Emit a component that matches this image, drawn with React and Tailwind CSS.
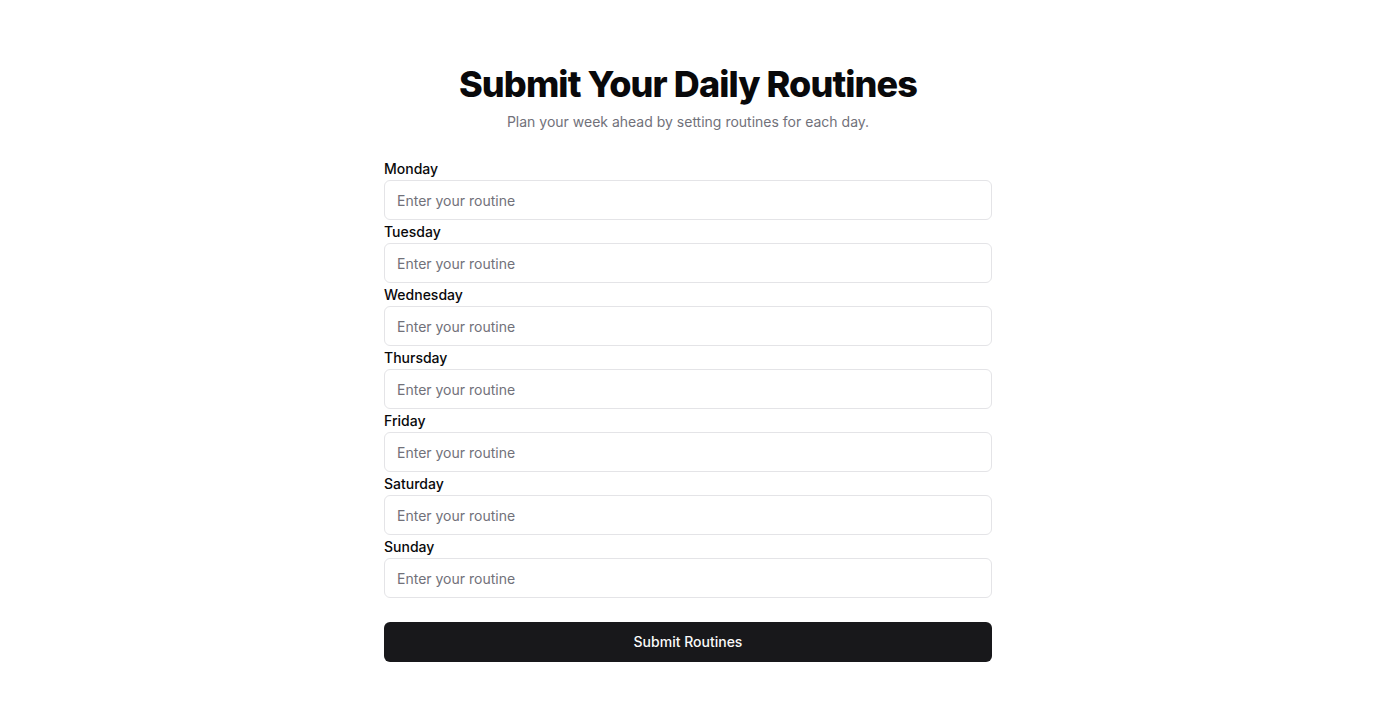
import React from 'react'

const days = ['Monday', 'Tuesday', 'Wednesday', 'Thursday', 'Friday', 'Saturday', 'Sunday']

export default function App() {
  return (
    <div className="min-h-screen bg-white font-['Inter',sans-serif] text-[#09090b]">
      <div className="mx-auto w-[608px] pt-[62px]">
        <h1 className="text-center text-[36px] leading-[44px] font-extrabold tracking-tight">
          Submit Your Daily Routines
        </h1>
        <p className="mt-[6px] text-center text-sm leading-5 text-[#71717a]">
          Plan your week ahead by setting routines for each day.
        </p>

        {/* form */}
        <form className="mt-[27px] flex flex-col gap-[2px]" onSubmit={e => e.preventDefault()}>
          {days.map(day => (
            <div key={day} className="flex flex-col gap-[1px]">
              <label className="text-sm leading-5 font-medium">{day}</label>
              <input
                type="text"
                placeholder="Enter your routine"
                className="h-10 w-full rounded-md border border-[#e4e4e7] px-3 text-sm text-[#09090b] placeholder:text-[#71717a] outline-none"
              />
            </div>
          ))}
          <button
            type="submit"
            className="mt-[22px] h-10 w-full rounded-md bg-[#18181b] text-sm font-medium text-[#fafafa]"
          >
            Submit Routines
          </button>
        </form>
      </div>
    </div>
  )
}
